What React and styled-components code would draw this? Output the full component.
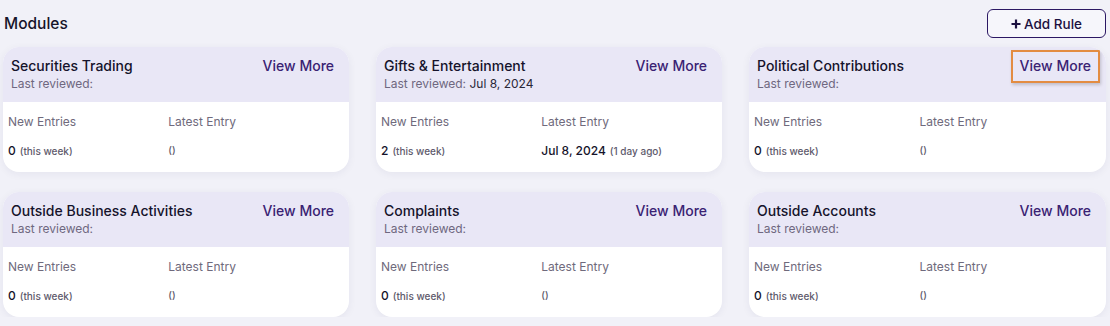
import React from 'react';
import styled, { createGlobalStyle } from 'styled-components';

const GlobalStyle = createGlobalStyle`
  body {
    margin: 0;
    background: #f1f1f8;
    font-family: Inter, "Noto Sans", sans-serif;
    color: #16142a;
  }
`;

const Page = styled.div`
  padding: 9px 4px 0 3px;
  width: 1103px;
`;

const TopBar = styled.div`
  display: flex;
  justify-content: space-between;
  align-items: center;
  height: 29px;
  margin-bottom: 9px;
`;

const PageTitle = styled.h2`
  margin: 0 0 0 1px;
  font-size: 15.5px;
  font-weight: 500;
  color: #16142a;
`;

const AddButton = styled.button`
  width: 119px;
  height: 29px;
  border: 1px solid #2b1763;
  border-radius: 6px;
  background: #f6f6fb;
  font-family: inherit;
  font-size: 13.5px;
  font-weight: 500;
  color: #1b1040;
  display: flex;
  align-items: center;
  justify-content: center;
  gap: 3px;
`;

const Grid = styled.div`
  display: grid;
  grid-template-columns: 346px 346px 357px;
  column-gap: 27px;
  row-gap: 20px;
`;

const Card = styled.div`
  background: #fff;
  border-radius: 16px;
  overflow: hidden;
  box-shadow: 0 2px 8px rgba(40, 30, 90, 0.06);
  height: 125px;
  display: flex;
  flex-direction: column;
`;

const CardHeader = styled.div`
  background: #e9e7f6;
  height: 55px;
  padding: 10px 15px 0 8px;
  box-sizing: border-box;
  display: flex;
  justify-content: space-between;
  align-items: flex-start;
`;

const Title = styled.div`
  font-size: 14px;
  font-weight: 500;
  line-height: 18px;
  color: #15132b;
`;

const Reviewed = styled.div`
  font-size: 12px;
  line-height: 18px;
  color: #6f6880;

  span {
    color: #2a2838;
  }
`;

const ViewMore = styled.a`
  font-size: 14px;
  font-weight: 500;
  line-height: 18px;
  color: #3a2273;
  text-decoration: none;
  padding: 5px 7px 6px;
  margin: -7px -9px 0 0;
  border: 2px solid ${p => (p.$focused ? '#e38c42' : 'transparent')};
  box-shadow: ${p => (p.$focused ? '1px 2px 3px rgba(0,0,0,0.18)' : 'none')};
`;

const CardBody = styled.div`
  display: grid;
  grid-template-columns: 47.7% 1fr;
  grid-template-rows: 30px 30px;
  padding: 4px 5px 0;
  align-items: center;
`;

const Label = styled.div`
  font-size: 12px;
  color: #6f6a7c;
`;

const Value = styled.div`
  font-size: 12px;
  font-weight: 500;
  color: #15132b;
  display: flex;
  align-items: baseline;
  gap: 4px;
  margin-top: -2px;
`;

const Muted = styled.span`
  font-size: 10px;
  font-weight: 500;
  color: #5e5a6c;
`;

const modules = [
  { title: 'Securities Trading', reviewed: '', count: 0, latest: '', ago: '' },
  { title: 'Gifts & Entertainment', reviewed: 'Jul 8, 2024', count: 2, latest: 'Jul 8, 2024', ago: '1 day ago' },
  { title: 'Political Contributions', reviewed: '', count: 0, latest: '', ago: '', focused: true },
  { title: 'Outside Business Activities', reviewed: '', count: 0, latest: '', ago: '' },
  { title: 'Complaints', reviewed: '', count: 0, latest: '', ago: '' },
  { title: 'Outside Accounts', reviewed: '', count: 0, latest: '', ago: '' },
];

const ModuleCard = ({ title, reviewed, count, latest, ago, focused }) => (
  <Card>
    <CardHeader>
      <div>
        <Title>{title}</Title>
        <Reviewed>
          Last reviewed: {reviewed && <span>{reviewed}</span>}
        </Reviewed>
      </div>
      <ViewMore href="#" $focused={focused}>View More</ViewMore>
    </CardHeader>
    <CardBody>
      <Label>New Entries</Label>
      <Label>Latest Entry</Label>
      <Value>
        {count} <Muted>(this week)</Muted>
      </Value>
      <Value>
        {latest}
        <Muted>({ago})</Muted>
      </Value>
    </CardBody>
  </Card>
);

const App = () => (
  <>
    <GlobalStyle />
    <Page>
      <TopBar>
        <PageTitle>Modules</PageTitle>
        <AddButton>
          <svg width="10" height="10" viewBox="0 0 10 10">
            <path d="M5 0.5v9M0.5 5h9" stroke="#1b1040" strokeWidth="2.2" />
          </svg>
          Add Rule
        </AddButton>
      </TopBar>
      <Grid>
        {modules.map(m => (
          <ModuleCard key={m.title} {...m} />
        ))}
      </Grid>
    </Page>
  </>
);

export default App;
